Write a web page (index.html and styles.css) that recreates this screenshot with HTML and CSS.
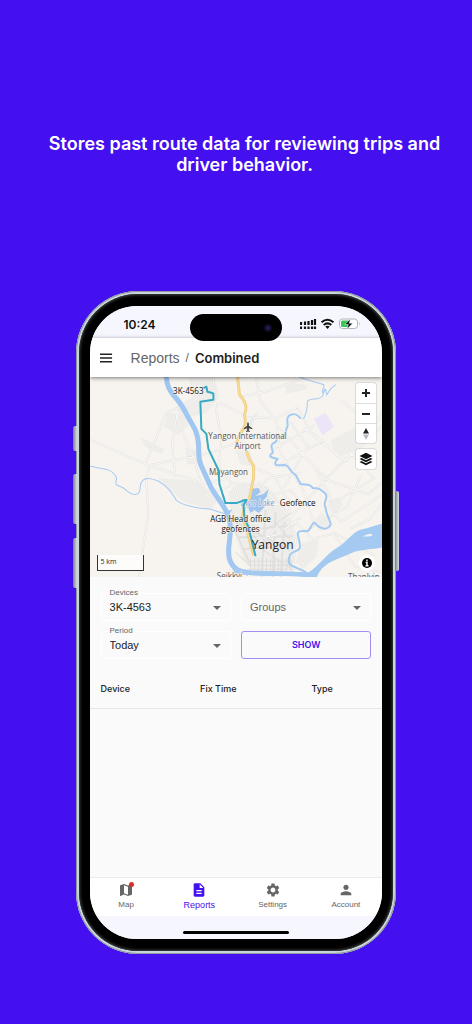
FILE: index.html
```html
<!DOCTYPE html>
<html lang="en">
<head>
<meta charset="utf-8">
<meta name="viewport" content="width=device-width, initial-scale=1">
<title>Reports / Combined</title>
<link rel="stylesheet" href="styles.css">
</head>
<body>
<main class="promo">
  <h1 class="headline">Stores past route data for reviewing trips and driver behavior.</h1>
  <div class="phone">
    <span class="side-key key-action"></span>
    <span class="side-key key-up"></span>
    <span class="side-key key-down"></span>
    <span class="side-key key-power"></span>
    <div class="bezel">
    <div class="screen">
      <div class="status">
        <span class="clock">10:24</span>
        <span class="island"><span class="lens"></span></span>
        <svg class="status-icons" width="60" height="12" viewBox="0 0 60 12" aria-hidden="true">
          <path d="M1 4v3M5 3.500v3.500M8.500 3v4M12 2v5M15 1v6" stroke="#111" stroke-width="2.200"/>
          <path d="M1 8.500v2.500M5 8.500v2.500M8.500 8.500v2.500M12 8.500v2.500M15 8.500v2.500" stroke="#111" stroke-width="2.200"/>
          <g fill="none" stroke="#111" stroke-width="2">
            <path d="M21.500 4.300Q27.500-.8 33.500 4.300"/><path d="M23.700 7Q27.500 3.800 31.300 7"/>
          </g>
          <path d="M25.300 8.500Q27.500 6.900 29.700 8.500L27.500 11z" fill="#111"/>
          <rect x="39.500" y="1" width="18" height="9.500" rx="3" fill="#fff" stroke="#b3b3b8"/>
          <path d="M42.500 2.500H48V9H42.500Q41 9 41 7.500V4Q41 2.500 42.500 2.500z" fill="#35c759"/>
          <path d="M59 4.200q1.500 1.500 0 3" fill="#aaa"/>
          <path d="M50.500.8 44.800 6.500h3.500l-1.300 4.700 5.800-6h-3.500z" fill="#111" stroke="#fff" stroke-width=".5"/>
        </svg>
      </div>
      <header class="appbar">
        <button class="menu" type="button" aria-label="Menu">
          <svg width="14" height="10" viewBox="0 0 14 10"><path d="M0 1h13M0 5h13M0 9h13" stroke="#222" stroke-width="1.500"/></svg>
        </button>
        <nav class="crumbs" aria-label="Breadcrumb"><a href="#reports">Reports</a><span class="slash">/</span><strong>Combined</strong></nav>
      </header>
      <section class="map" aria-label="Map">
        <svg class="map-art" viewBox="90 377 292 200" preserveAspectRatio="xMidYMid slice">
          <rect x="90" y="377" width="292" height="200" fill="#f7f4ef"/>
          <g fill="#eeedea">
            <path d="M188 377h26l5 20-13 16-23 6-8-12 18-10zM167 413l17 2 4 11-10 9-14-8zM140 437l24 12-3 5-16-7zM185 447l11 3 3 13-12 2zM158 478l40 3 20 18-7 10-28-7zM285 383l22 2-2 5-20 4zM330 440l26-13v23l-20 8zM235 450l15 2 4 14-14-2z"/>
            <path d="M228 492l14-10 25 4 20 24 9 28-3 28-30 8-20-15-10-30zM313 521l8-9 10 11-11 8zM327 500l12-3 3 8-10 12zM300 543l18-4-2 17-12 12-9-6z"/>
          </g>
          <path d="m313 419 12-6 8 14-11 9z" fill="#ece4f7"/>
          <path d="m250 419 8-8-6 14-8 7z" fill="#e8ebf0"/>
          <path d="m262 510 18 15 8 20-3 25h-35l-3-25z" fill="#efeeec"/>
          <g class="road-edge">
            <path id="r1" d="M90 440 150 466 205 484 225 479M150 465l60-12 25-10M145 465l7-17 14-35 25-10 7-5M175 413l20 50 5 20M150 465l-4 12 2 38-4 25-5 37M177 413l-5 30 3 35M213 377l1 22 7 42-3 25 15 20 10 30M199 402l25 3 20 10M255 377l5 25 15 18 5 33M240 397l28-6 40-14M245 417l30 2 22-12 12 24 36 30 37-36M382 410l-16 28-40 40-25 28-38 33M275 424l38 42 17 32M272 450l42-25M276 467l48-27M289 421l18 25-24 42M280 453l23 38 10 32M258 482l24 28 30 29 22-6 40 22M297 450l30 30 40 14 15-12M338 440l35 38-45 28 12 16 42-28M334 535l20 31 28 6M382 503l-13 16-20 10M303 428l39 32M340 400l24 21 18-2M253 493l15-15 33-5M250 515l40-17M241 540l35-5 24-18M254 490l-18-7-31 13M254 468l20 8 13 25 8 39-3 33M310 545l-12 30M270 495l20-5 15 18M360 475l-14 32-40 23"/>
            <path d="M240 530l54-5M235 522l54 28M236 537l56-1M242 549l48-4M265 510l-4 67M275 512l-3 65M284 520l-4 57M232 525l18 40"/>
          </g>
          <use href="#r1" class="road"/>
          <g class="grid-roads"><path d="M247 561h45M247 565h45M247 569h45M250 558v15M254 558v15M258 558v15M262 558v15M266 558v15M270 558v15M274 558v15M278 558v15M282 558v15M286 558v15M290 558v15M235 552l13 12M242 510l18 38 30 20M252 525l16 20M273 520l16 19M265 530l25-17"/></g>
          <g class="creek">
            <path d="M90 466c12 4 18 1 24 8 5 6 1 5 2 8-1 5 5 3 10 8 7 6 14 7 14-3 1-10 8-10 18-6 10 6 13 11 18 19 8 7 24 8 33 9 8 2 12 4 18 5"/>
            <path d="M298 377c10 5 18 5 25 8 1 5-3 4-1 8l3-3 1 5 4-6 5-4M324 389l-2 7c-4 5-11 2-15 5-1 5 0 8-2 13-2 3 0 4-3 5"/>
          </g>
          <path class="stream" d="M300 419c-2-3-6-6-10-4-5 2-3 7-3 11-3 5 0 9-7 11-7 0-1 5-7 6-5 3 0 7-1 10-7 5 3 5 5 6-5 6-2 7 6 6 7 0 4 6 12 10l5 9c4 1 10-1 12 4 6 0 8 1 13 6 3 5-4 8 0 14 0 6 4 11 5 16-3 7-10 5-15 0-3-5-5 6-8 7-6 0-10-1-10 3 1 5 3 9 2 14-2 4-10 3-10 8-2 5-1 8 3 10 7 3 11 4 14 7"/>
          <path class="river" d="M166 377c1 10 3 13 7 18 7 8 10 12 14 21 6 11 10 15 11 27 1 8-1 14 3 23l9 20c5 10 14 19 18 30 3 8 2 17 1 25-2 14-1 23 9 29l10 3"/>
          <path d="M230 564c12 8 30 6 48 7 12 0 20 1 30 1 12-8 17-18 29-25 14-9 14-17 29-19l16-5v24c-17 3-25 2-34 7-13 6-26 8-32 23h-10c-24-3-42 1-72-4z" fill="#a4caf2"/>
          <path d="M362 536q8-4 10-1-4 2-10 1z" fill="#f7f4ef"/>
          <path d="m250 489 8-1 2 4-5 4 8-2 5-5-2 8-4 4 2 6-6 6-4-3-4 3-5-11 4-4zM226 512l6-3-3 5z" fill="#9fc5ee"/>
          <path class="highway" d="M237 377l2 18c8 9 7 14 5 20 1 6 2 12-4 18l-4 10M246 451l3 9 4 6v12l-4 20-5 8-2 12 5 14 6 23"/>
          <path class="highway-core" d="M237 377l2 18c8 9 7 14 5 20 1 6 2 12-4 18l-4 10M246 451l3 9 4 6v12l-4 20-5 8-2 12 5 14 6 23"/>
          <path d="m247.500 422 .9 2v2l3.300 2.300v1l-3.300-1v2.300l1.100.9v.7l-2-.5-2 .5v-.7l1.100-.9v-2.300l-3.300 1v-1l3.300-2.300v-2z" fill="#444"/>
          <g class="place">
            <text x="247" y="439">Yangon International</text><text x="247" y="449">Airport</text>
            <text x="228" y="475">Mayangon</text>
            <text x="257" y="506" class="lake">Inya Lake</text>
            <text x="229" y="579">Seikkyi</text><text x="363" y="580">Thanlyin</text>
          </g>
          <path class="route" d="M202 389l4-2 1 5 4 1 2 1v6l-13 2 1 27 5 5 2 15 10 21 1 14 6 19h11l8-3h2l-3 5 1 13 4 9 7 29"/>
          <g class="marker">
            <text x="188" y="394">3K-4563</text><text x="297" y="506">Geofence</text>
            <text x="240" y="522">AGB Head office</text><text x="240" y="532">geofences</text>
          </g>
          <text class="city" x="272" y="549">Yangon</text>
        </svg>
        <div class="controls">
          <div class="group">
            <button type="button" aria-label="Zoom in"><svg width="10" height="10" viewBox="0 0 10 10"><path d="M1 5h8M5 1v8" stroke="#222" stroke-width="2"/></svg></button>
            <button type="button" aria-label="Zoom out"><svg width="10" height="10" viewBox="0 0 10 10"><path d="M1 5h8" stroke="#222" stroke-width="2"/></svg></button>
            <button type="button" aria-label="Reset bearing"><svg width="8" height="14" viewBox="0 0 8 14"><path d="M4 1 7 6.500H1z" fill="#222"/><path d="M4 13 7 7.500H1z" fill="#bbb"/></svg></button>
          </div>
          <div class="group">
            <button type="button" aria-label="Layers"><svg width="14" height="14" viewBox="0 0 14 14" fill="#111"><path d="M7 .8 13.500 4 7 7.200.5 4z"/><path d="M2.500 6 7 8.200 11.500 6l2 1L7 10.200.5 7z"/><path d="M2.500 9 7 11.200 11.500 9l2 1L7 13.300.5 10z"/></svg></button>
          </div>
        </div>
        <div class="scale">5 km</div>
        <button class="info" type="button" aria-label="Attribution"><svg width="16" height="16" viewBox="0 0 16 16"><circle cx="8" cy="8" r="8" fill="#fff"/><circle cx="8" cy="8" r="5" fill="#000"/><path d="M8 4.500v1.800M6.700 7.500H8v3M6.500 10.700h3" stroke="#fff" stroke-width="1.400"/></svg></button>
      </section>
      <section class="content">
        <form class="filters">
          <div class="field">
            <label for="devices">Devices</label>
            <select id="devices"><option>3K-4563</option></select>
          </div>
          <div class="field muted">
            <select id="groups" aria-label="Groups"><option>Groups</option></select>
          </div>
          <div class="field">
            <label for="period">Period</label>
            <select id="period"><option>Today</option></select>
          </div>
          <button class="show" type="button">SHOW</button>
        </form>
        <table class="results">
          <thead><tr><th class="c-device">Device</th><th class="c-time">Fix Time</th><th>Type</th></tr></thead>
        </table>
      </section>
      <nav class="tabs" aria-label="Main">
        <a href="#map"><span class="tab-icon"><svg width="16" height="16" viewBox="0 0 24 24" fill="#666"><path d="m20.500 3-.16.030L15 5.100 9 3 3.360 4.900c-.21.070-.36.250-.36.480V20.500c0 .28.220.5.500.5l.16-.03L9 18.900l6 2.100 5.640-1.900c.21-.07.360-.25.360-.48V3.500c0-.28-.22-.5-.5-.5zM15 19l-6-2.110V5l6 2.110V19z"/></svg><span class="badge"></span></span>Map</a>
        <a href="#reports" class="active" aria-current="page"><span class="tab-icon"><svg width="16" height="16" viewBox="0 0 24 24" fill="#4410ee"><path d="M14 2H6c-1.100 0-1.990.9-1.990 2L4 20c0 1.100.89 2 1.990 2H18c1.100 0 2-.9 2-2V8l-6-6zm2 16H8v-2h8v2zm0-4H8v-2h8v2zm-3-5V3.500L18.500 9H13z"/></svg></span>Reports</a>
        <a href="#settings"><span class="tab-icon"><svg width="16" height="16" viewBox="0 0 24 24" fill="#666"><path d="M19.140 12.940c.04-.3.060-.61.060-.94 0-.32-.02-.64-.07-.94l2.030-1.580c.18-.14.230-.41.120-.61l-1.920-3.320c-.12-.22-.37-.29-.59-.22l-2.390.96c-.5-.38-1.030-.7-1.620-.94l-.36-2.540c-.04-.24-.24-.41-.48-.41h-3.840c-.24 0-.43.170-.47.410l-.36 2.540c-.59.240-1.130.570-1.620.94l-2.390-.96c-.22-.08-.47 0-.59.220L2.740 8.870c-.12.210-.08.470.12.610l2.030 1.580c-.05.300-.09.630-.09.940s.02.640.07.940l-2.030 1.580c-.18.140-.23.410-.12.610l1.920 3.320c.12.220.37.290.59.220l2.390-.96c.5.380 1.030.7 1.620.94l.36 2.540c.05.240.24.410.48.410h3.840c.24 0 .44-.17.470-.41l.36-2.540c.59-.24 1.130-.56 1.620-.94l2.390.96c.22.080.47 0 .59-.22l1.920-3.320c.12-.22.070-.47-.12-.61l-2.010-1.580zM12 15.600c-1.980 0-3.600-1.620-3.600-3.600s1.620-3.600 3.600-3.600 3.600 1.620 3.600 3.600-1.620 3.600-3.600 3.600z"/></svg></span>Settings</a>
        <a href="#account"><span class="tab-icon"><svg width="16" height="16" viewBox="0 0 24 24" fill="#666"><path d="M12 12c2.210 0 4-1.790 4-4s-1.790-4-4-4-4 1.790-4 4 1.790 4 4 4zm0 2c-2.670 0-8 1.340-8 4v2h16v-2c0-2.660-5.330-4-8-4z"/></svg></span>Account</a>
      </nav>
      <div class="home"><span></span></div>
    </div>
    </div>
  </div>
</main>
</body>
</html>
```

FILE: styles.css
```css
* { box-sizing: border-box; }
body { margin: 0; background: #4410f0; font-family: "Liberation Sans", Arial, sans-serif; color: #222; }
button { border: 0; padding: 0; background: none; font: inherit; cursor: pointer; }
a { color: inherit; text-decoration: none; }
svg { display: block; }

.promo { min-height: 100vh; padding-top: 133px; display: flex; flex-direction: column; align-items: center; gap: 116px; }
.headline { margin: 0 16px 0 33px; max-width: 400px; font: 600 18px/21px Inter, sans-serif; color: #fff; text-align: center; }

.phone { position: relative; width: 68%; padding: 3px; border-radius: 62px; background: linear-gradient(90deg, #8b969e, #dbe6ea 1%, #8f9aa2 2%, #8f9aa2 98%, #dbe6ea 99%, #8b969e); box-shadow: inset 0 0 0 1px #8e999f, inset 0 0 0 3px #c9d5da; }
.bezel { padding: 12px 11px; border-radius: 59px; background: #000; box-shadow: inset 0 0 3px 1px #444; }
.screen { min-height: 633px; border-radius: 47px; overflow: hidden; background: #fafafa; display: flex; flex-direction: column; }
.side-key { position: absolute; width: 4px; background: linear-gradient(90deg, #777f87, #d5dde2); border-radius: 2px 0 0 2px; }
.key-action { left: -3px; top: 135px; height: 25px; }
.key-up { left: -3px; top: 183px; height: 50px; }
.key-down { left: -3px; top: 247px; height: 50px; }
.key-power { right: -3px; top: 200px; height: 80px; border-radius: 0 2px 2px 0; }

.status { flex: none; height: 32px; padding: 0 22px; background: #f6f7fe; display: grid; grid-template-columns: 1fr 92px 1fr; align-items: center; }
.clock { padding: 2px 0 0 12px; font: 600 12px/16px Inter, sans-serif; color: #111; }
.island { position: relative; z-index: 2; height: 27px; margin-top: 8px; border-radius: 14px; background: #000; display: flex; align-items: center; justify-content: flex-end; padding-right: 10px; }
.lens { width: 8px; height: 8px; border-radius: 50%; background: radial-gradient(#23236a, #090914 70%); }
.status-icons { justify-self: end; }

.appbar { position: relative; z-index: 1; height: 39px; padding-left: 10px; background: #fff; display: flex; align-items: center; gap: 18px; box-shadow: 0 1px 4px rgba(0,0,0,.5); }
.menu { width: 13px; height: 24px; display: flex; align-items: center; }
.crumbs { display: flex; align-items: center; font-size: 14px; line-height: 20px; color: #666; }
.slash { margin: 0 6px; font-size: 12px; }
.crumbs strong { font: 600 13px/20px Inter, sans-serif; color: #222; }

.map { position: relative; height: 200px; }
.map-art { width: 100%; height: 100%; }
.road-edge { fill: none; stroke: #e2e1df; stroke-width: 2; }
.road { fill: none; stroke: #f9f8f6; stroke-width: 1; }
.grid-roads { fill: none; stroke: #dedddb; stroke-width: 1; }
.creek { fill: none; stroke: #a4caf2; stroke-width: 1; }
.stream { fill: none; stroke: #a4caf2; stroke-width: 2; }
.river { fill: none; stroke: #a0c7f1; stroke-width: 5; }
.highway { fill: none; stroke: #f0cf87; stroke-width: 3; }
.highway-core { fill: none; stroke: #fbdf9d; stroke-width: 1; }
.route { fill: none; stroke: #36a9c3; stroke-width: 2; stroke-linejoin: round; }
.place, .marker, .city { font-family: "Open Sans", sans-serif; text-anchor: middle; paint-order: stroke; stroke: #f7f4ef; stroke-width: 1; }
.place { font-size: 8px; fill: #555; }
.place .lake { fill: #6fa7df; font-style: italic; }
.marker { font-size: 8px; fill: #111; }
.city { font-size: 12px; fill: #222; stroke: none; }

.controls { position: absolute; top: 6px; right: 6px; display: grid; gap: 6px; }
.group { width: 20px; border-radius: 3px; background: #fff; box-shadow: 0 0 0 1px rgba(0,0,0,.1); }
.group button { width: 20px; height: 20px; display: grid; place-items: center; }
.group button + button { border-top: 1px solid #ddd; }
.scale { position: absolute; left: 7px; bottom: 6px; width: 47px; height: 16px; padding-left: 3px; border: 1px solid #333; border-top: 0; background: rgba(255,255,255,.75); font: 7px/14px "Open Sans", sans-serif; }
.info { position: absolute; right: 7px; bottom: 6px; }

.content { flex: 1; }
.filters { padding: 16px 11px 0; display: grid; grid-template-columns: 1fr 1fr; gap: 10px; }
.field { position: relative; height: 28px; border: 1px solid #fff; border-radius: 3px; }
.field label { position: absolute; top: -6px; left: 8px; background: #fafafa; font-size: 8px; line-height: 10px; color: #666; }
.field select { appearance: none; width: 100%; height: 100%; border: 0; padding: 0 8px; background: transparent; font: 11px/26px "Liberation Sans", Arial, sans-serif; color: #222; }
.field::after { content: ""; position: absolute; right: 9px; top: 12px; border: 4px solid transparent; border-top-color: #666; border-bottom: 0; pointer-events: none; }
.field.muted select { color: #666; }
.show { height: 28px; border: 1px solid #a58df5; border-radius: 3px; color: #4410ee; font: 600 9px/26px Inter, sans-serif; }
.results { width: 100%; margin-top: 12px; border-collapse: collapse; table-layout: fixed; }
.results th { height: 37px; padding: 0 11px; border-bottom: 1px solid #e6e6e6; text-align: left; font: 500 9px/12px Inter, sans-serif; color: #222; }
.c-device { width: 34%; }
.c-time { width: 38%; }

.tabs { flex: none; height: 39px; background: #fff; border-top: 1px solid #ececec; display: grid; grid-template-columns: repeat(4, 1fr); }
.tabs a { display: flex; flex-direction: column; align-items: center; padding-top: 4px; font-size: 8px; line-height: 14px; color: #666; }
.tabs .active { font-size: 9px; color: #4410ee; }
.tab-icon { position: relative; }
.badge { position: absolute; top: 0; right: 0; width: 5px; height: 5px; border-radius: 50%; background: #d92c2c; }
.home { flex: none; height: 23px; background: #f6f7fe; display: flex; justify-content: center; align-items: flex-end; padding-bottom: 5px; }
.home span { width: 36%; height: 3px; border-radius: 2px; background: #000; }
```
